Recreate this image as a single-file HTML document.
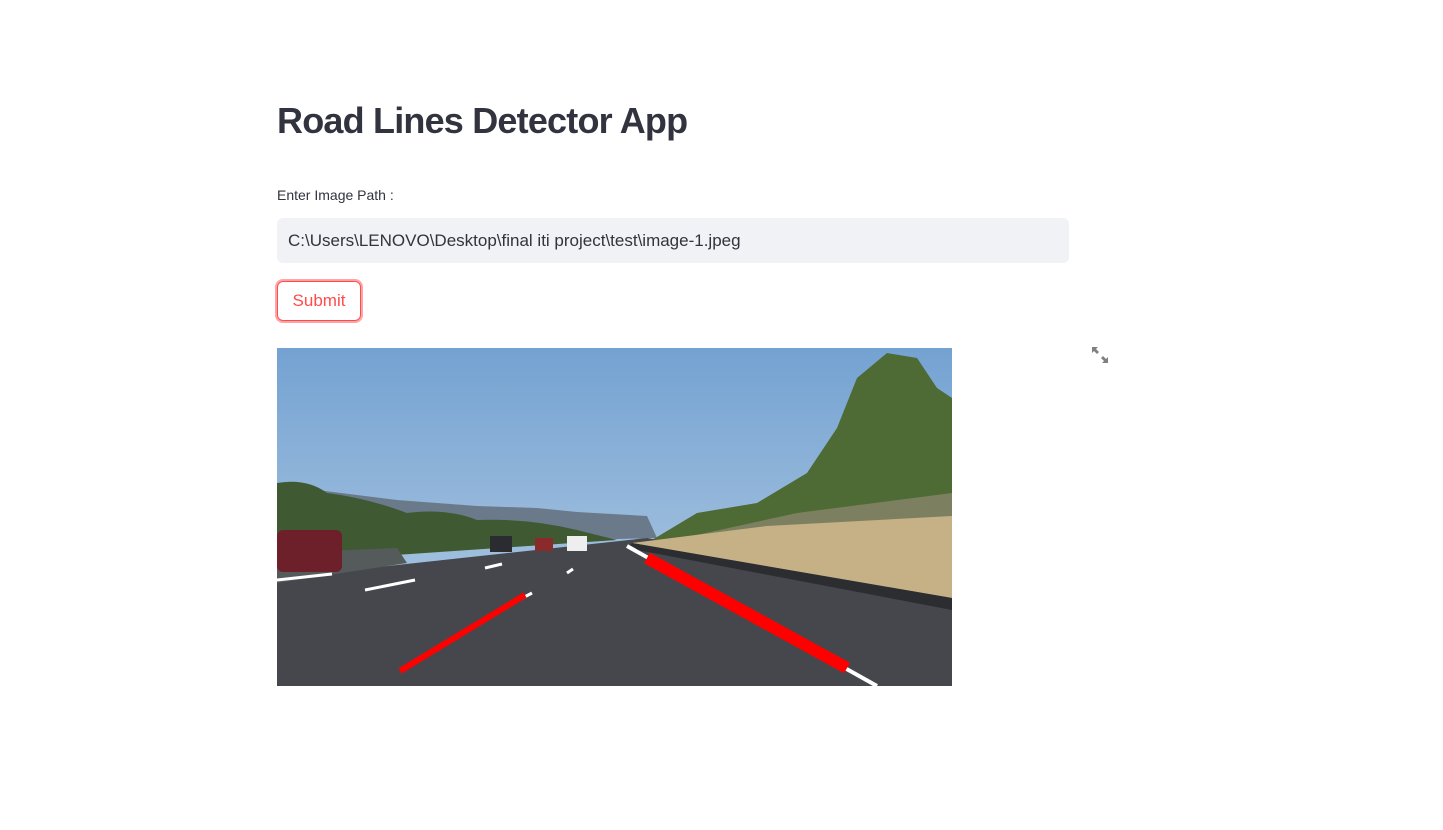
<!DOCTYPE html>
<html><head><meta charset="utf-8"><style>
html,body{margin:0;padding:0;background:#fff;width:1443px;height:830px;overflow:hidden;font-family:"Liberation Sans",sans-serif;color:#31333f}
h1{position:absolute;left:277px;top:100px;margin:0;font-size:36px;font-weight:bold;letter-spacing:-0.8px;color:#31333f}
.lbl{position:absolute;left:277px;top:187px;font-size:14px}
.inp{position:absolute;left:277px;top:218px;width:792px;height:45px;background:#f0f2f6;border-radius:6px;box-sizing:border-box;padding-left:11px;line-height:45px;font-size:17px}
.btn{position:absolute;left:277px;top:281px;width:84px;height:40px;border:1px solid #ff4b4b;border-radius:6px;box-sizing:border-box;box-shadow:0 0 0 2px rgba(255,75,75,.5);color:#ff4b4b;font-size:17px;text-align:center;line-height:38px}
svg.img{position:absolute;left:277px;top:348px}
</style></head><body>
<h1>Road Lines Detector App</h1>
<div class="lbl">Enter Image Path :</div>
<div class="inp">C:\Users\LENOVO\Desktop\final iti project\test\image-1.jpeg</div>
<div class="btn">Submit</div>
<svg class="img" width="675" height="338" viewBox="0 0 675 338">
<defs><linearGradient id="sky" x1="0" y1="0" x2="0" y2="1"><stop offset="0" stop-color="#74a2d2"/><stop offset="1" stop-color="#b8cfe4"/></linearGradient></defs>
<rect width="675" height="338" fill="url(#sky)"/>
<path d="M0 140 L40 142 L120 152 L200 158 L260 160 L300 164 L370 168 L380 190 L0 200Z" fill="#6a7a8a"/>
<path d="M0 135 Q30 130 50 145 Q90 150 130 165 Q170 160 200 172 Q250 170 300 182 L340 192 L0 215Z" fill="#3f5a32"/>
<path d="M370 195 L420 165 L480 155 L530 125 L560 80 L580 30 L610 5 L640 10 L660 40 L675 50 L675 200 Z" fill="#4e6a35"/>
<path d="M360 200 L520 165 L675 145 L675 170 L600 180 L420 205Z" fill="#7d8060"/>
<path d="M0 230 L370 190 L675 250 L675 338 L0 338Z" fill="#45474d"/>
<path d="M355 195 L490 178 L675 168 L675 250 L500 220Z" fill="#c6b085"/>
<path d="M355 195 L675 250 L675 262 L350 200Z" fill="#2c2d31"/>
<path d="M0 205 L120 200 L130 215 L0 235Z" fill="#555a5a"/>
<rect x="0" y="182" width="65" height="42" rx="6" fill="#6d1f2a"/>
<rect x="213" y="188" width="22" height="16" fill="#2a2c30"/><rect x="258" y="190" width="18" height="13" fill="#8a2a2a"/><rect x="290" y="188" width="20" height="15" fill="#eee"/>
<g stroke="#fff" stroke-width="3"><line x1="0" y1="232" x2="55" y2="226"/><line x1="88" y1="242" x2="138" y2="232"/><line x1="208" y1="220" x2="225" y2="216"/><line x1="290" y1="225" x2="296" y2="221"/><line x1="350" y1="198" x2="600" y2="338" stroke-width="4"/><line x1="223" y1="262" x2="255" y2="245"/></g>
<g stroke="#f00" stroke-linecap="butt"><line x1="123" y1="323" x2="248" y2="247" stroke-width="6"/><line x1="370" y1="210" x2="570" y2="320" stroke-width="12"/></g>
</svg>
<svg style="position:absolute;left:1091px;top:346px" width="18" height="18" viewBox="0 0 18 18" fill="#808080"><path d="M1 1h6l-2 2 3 3-2 2-3-3-2 2z"/><path d="M17 17h-6l2-2-3-3 2-2 3 3 2-2z"/></svg>
</body></html>
